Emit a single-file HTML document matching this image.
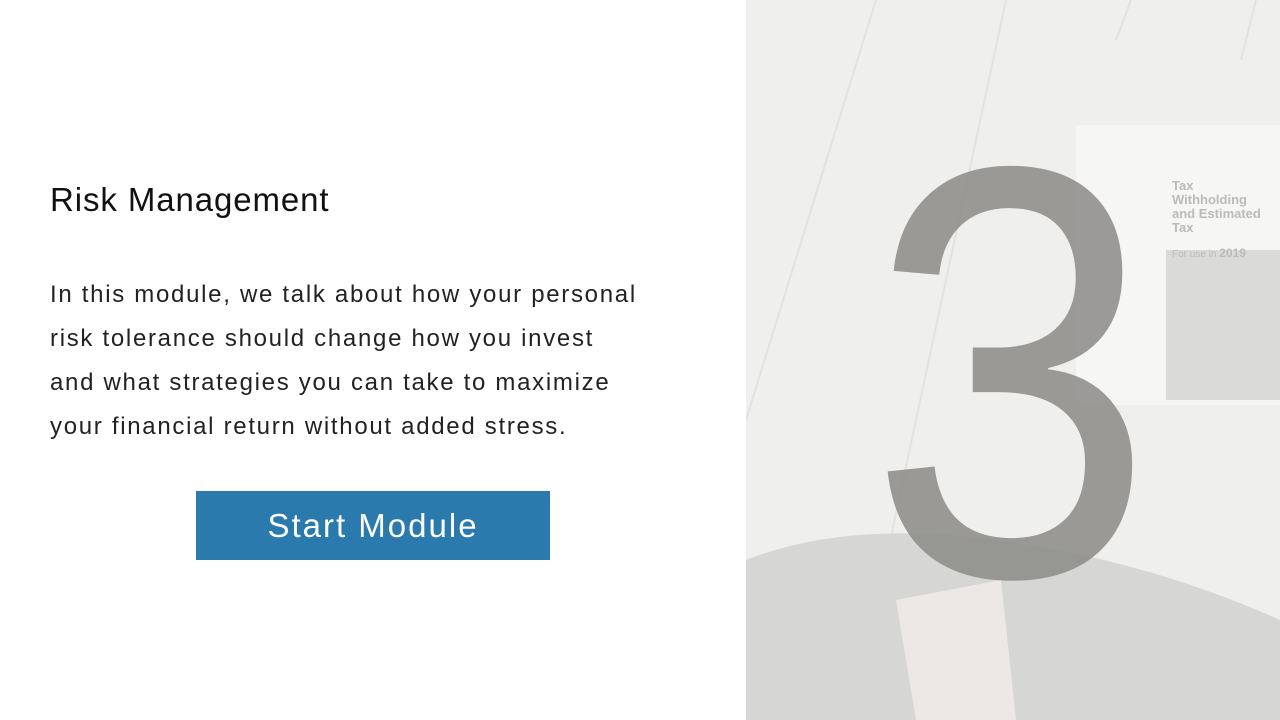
<!DOCTYPE html>
<html><head><meta charset="utf-8"><style>
body{margin:0;width:1280px;height:720px;overflow:hidden;background:#fff;font-family:"Liberation Sans",sans-serif;position:relative}
h1{position:absolute;left:50px;top:181px;margin:0;font-weight:400;font-size:33px;color:#111;letter-spacing:0.9px}
p{position:absolute;left:50px;top:273px;margin:0;font-size:24px;line-height:44px;color:#222;width:680px;letter-spacing:1.7px;white-space:nowrap}
.btn{position:absolute;left:196px;top:491px;width:354px;height:69px;background:#2a7aad;color:#fff;font-size:33px;text-align:center;line-height:69px;letter-spacing:2px}
svg{position:absolute;left:746px;top:0}
.three{position:absolute;left:868px;top:80px;font-size:586px;line-height:586px;color:#8c8b88;opacity:0.85;transform:scaleX(0.88);transform-origin:0 0;font-family:"Liberation Sans",sans-serif}
</style></head><body>
<h1>Risk Management</h1>
<p>In this module, we talk about how your personal<br>risk tolerance should change how you invest<br>and what strategies you can take to maximize<br>your financial return without added stress.</p>
<div class="btn">Start Module</div>
<svg width="534" height="720" viewBox="0 0 534 720">
<rect width="534" height="720" fill="#efefed"/>
<g stroke="#e2e2e0" stroke-width="2"><line x1="130" y1="0" x2="0" y2="420"/><line x1="260" y1="0" x2="140" y2="560"/><line x1="385" y1="0" x2="370" y2="40"/><line x1="510" y1="0" x2="495" y2="60"/></g>
<rect x="330" y="125" width="230" height="280" fill="#f6f6f5"/>
<rect x="420" y="250" width="114" height="150" fill="#dadad8"/>
<text x="426" y="190" font-size="13" font-weight="bold" fill="#bbb">Tax</text>
<text x="426" y="204" font-size="13" font-weight="bold" fill="#bbb">Withholding</text>
<text x="426" y="218" font-size="13" font-weight="bold" fill="#bbb">and Estimated</text>
<text x="426" y="232" font-size="13" font-weight="bold" fill="#bbb">Tax</text>
<text x="426" y="257" font-size="10" fill="#bbb">For use in <tspan font-size="12" font-weight="bold">2019</tspan></text>
<path d="M0 560 Q100 520 250 540 Q400 560 534 620 V720 H0Z" fill="#d6d6d4"/>
<path d="M150 600 L170 720 H270 L255 580Z" fill="#ebe8e6"/>
</svg>
<div class="three">3</div>
</body></html>
